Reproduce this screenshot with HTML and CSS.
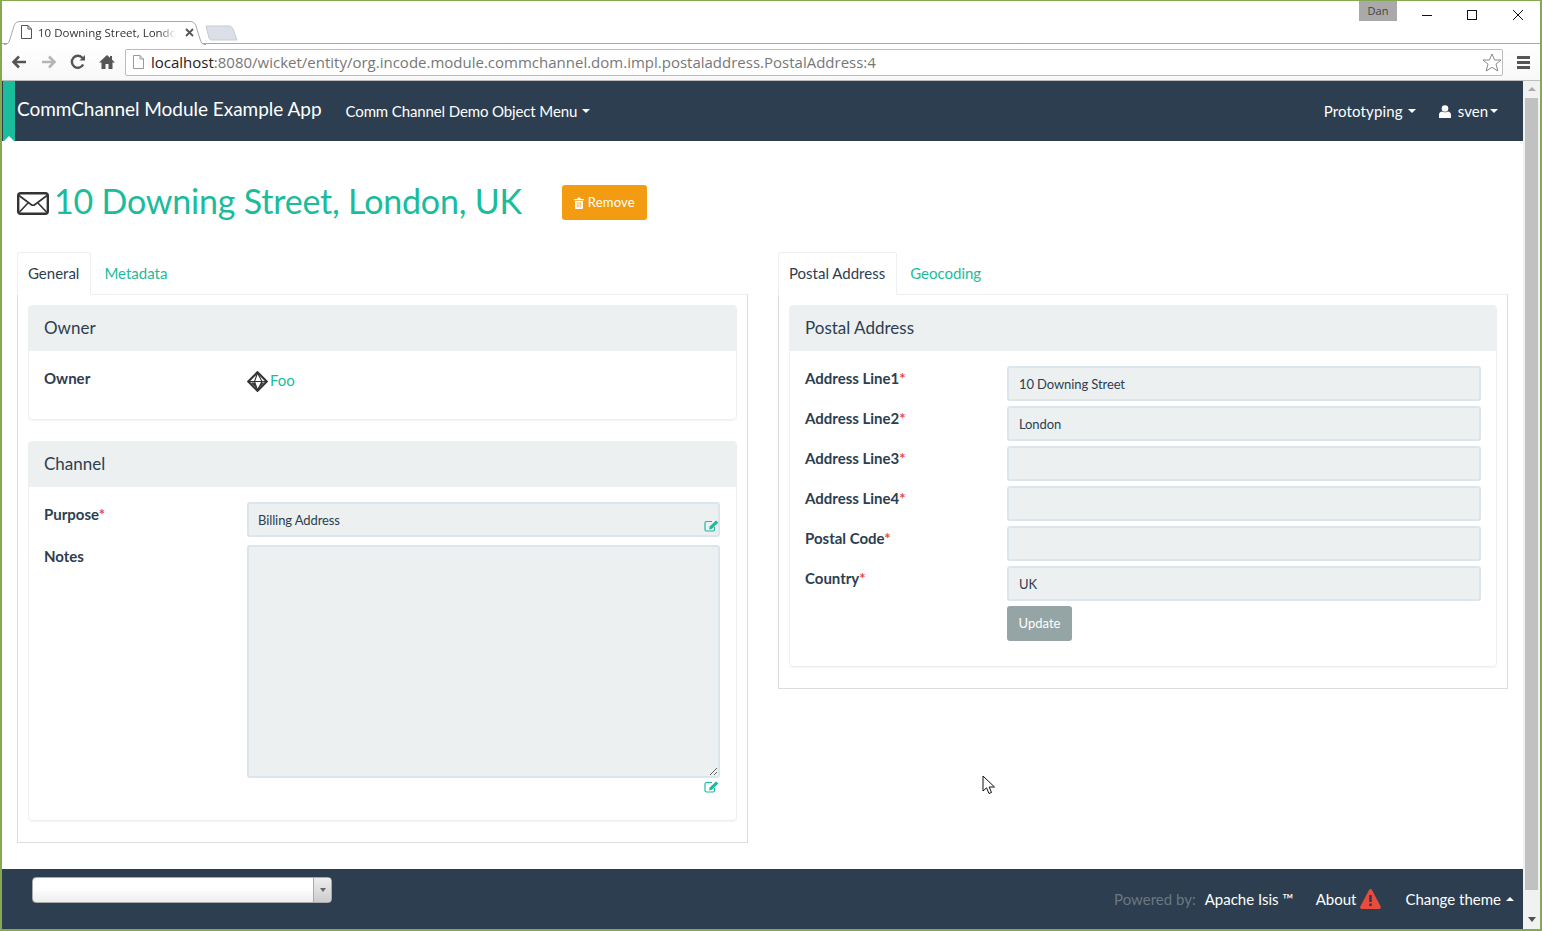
FILE: index.html
```html
<!DOCTYPE html>
<html lang="en">
<head>
<meta charset="utf-8">
<title>10 Downing Street, London, UK</title>
<link rel="stylesheet" href="styles.css">
</head>
<body>
<div class="window">
  <div class="tabstrip">
    <div class="browser-tab">
      <svg class="tab-shape" width="202" height="24" viewBox="0 0 202 24"><path d="M0 23.500 H1 C4 23.500 5 21 6 18 L10 5 C11 2 12.500 .5 16 .5 H186 C189.500 .5 191 2 192 5 L196 18 C197 21 198 23.500 201 23.500 H202" fill="#fff" stroke="#a8a8a8"/></svg>
      <svg class="doc-icon" width="11" height="14" viewBox="0 0 11 14"><path d="M.5.500H7L10.500 4V13.500H.5Z M7 .5V4H10.500" fill="#fff" stroke="#555"/></svg>
      <span class="tab-title">10 Downing Street, Londo</span>
      <svg class="tab-close" width="9" height="9" viewBox="0 0 9 9"><path d="M1 1L8 8M8 1L1 8" stroke="#555" stroke-width="1.800"/></svg>
    </div>
    <svg class="new-tab" width="33" height="16" viewBox="0 0 33 16"><path d="M1 1H24C26 1 27 2 28 4L32 15H6C5 15 4.500 14 4 13Z" fill="#dbe0e8" stroke="#c6cbd3"/></svg>
    <div class="spacer"></div>
    <div class="user-badge">Dan</div>
    <div class="win-controls">
      <svg width="10" height="10" viewBox="0 0 10 10"><path d="M0 5.500H10" stroke="#111"/></svg>
      <svg width="10" height="10" viewBox="0 0 10 10"><rect x=".5" y=".5" width="9" height="9" fill="none" stroke="#111"/></svg>
      <svg class="win-close" width="10" height="10" viewBox="0 0 10 10"><path d="M0 0L10 10M10 0L0 10" stroke="#111"/></svg>
    </div>
  </div>
  <div class="toolbar">
    <svg class="tool tool-back" width="16" height="14" viewBox="0 0 16 14"><path d="M15 7H3M8 1.500L2.500 7L8 12.500" fill="none" stroke="#555" stroke-width="2.600"/></svg>
    <svg class="tool" width="16" height="14" viewBox="0 0 16 14"><path d="M1 7H13M8 1.500L13.500 7L8 12.500" fill="none" stroke="#b5b5b5" stroke-width="2.600"/></svg>
    <svg class="tool" width="16" height="16" viewBox="0 0 16 16"><path d="M13.200 10.500A6 6 0 1 1 12.500 4" fill="none" stroke="#555" stroke-width="2.400"/><path d="M9.500 6.500H15V1Z" fill="#555"/></svg>
    <svg class="tool tool-home" width="16" height="16" viewBox="0 0 16 16"><path d="M8 1L0 8.500H2.500V15H6.500V10H9.500V15H13.500V8.500H16L13 5.700V2H11V3.800Z" fill="#555"/></svg>
    <div class="omnibox">
      <svg width="11" height="14" viewBox="0 0 11 14"><path d="M.5.500H7L10.500 4V13.500H.5Z M7 .5V4H10.500" fill="#fff" stroke="#999"/></svg>
      <span class="url"><span class="url-host">localhost</span>:8080/wicket/entity/org.incode.module.commchannel.dom.impl.postaladdress.PostalAddress:4</span>
      <svg class="star" width="20" height="19" viewBox="0 0 20 19"><path d="M10 1L12.600 7H19L14 11.200L15.800 18L10 14.300L4.200 18L6 11.200L1 7H7.400Z" fill="#fff" stroke="#888"/></svg>
    </div>
    <div class="hamburger"><i></i><i></i><i></i></div>
  </div>
  <div class="viewport">
    <div class="page">
      <nav class="navbar">
        <div class="ribbon"></div>
        <a class="brand">CommChannel Module Example App</a>
        <a class="nav-link menu-link">Comm Channel Demo Object Menu<i class="caret"></i></a>
        <div class="spacer"></div>
        <a class="nav-link proto-link">Prototyping<i class="caret"></i></a>
        <a class="nav-link user-link">
          <svg width="12" height="13" viewBox="0 0 12 13"><circle cx="6" cy="3.500" r="3.300" fill="#fff"/><path d="M0 13V9.500C0 7.800 1.500 6.800 3 6.500C4 7.500 8 7.500 9 6.500C10.500 6.800 12 7.800 12 9.500V13Z" fill="#fff"/></svg>
          <span>sven</span><i class="caret tight"></i>
        </a>
      </nav>
      <main class="content">
        <div class="title-row">
          <svg class="mail-icon" width="32" height="23" viewBox="0 0 32 23"><rect x="1.200" y="1.200" width="29.600" height="20.600" rx="2.500" fill="#fff" stroke="#333" stroke-width="2.400"/><path d="M2 3.500L14 12.500Q16 14 18 12.500L30 3.500M2.500 20L11.500 10.500M29.500 20L20.500 10.500" fill="none" stroke="#333" stroke-width="1.600"/></svg>
          <h1 class="title">10 Downing Street, London, UK</h1>
          <a class="btn btn-warning">
            <svg width="10" height="12" viewBox="0 0 10 12"><path d="M0 2H3.200L3.800 .5H6.200L6.800 2H10V3.200H0Z M1 4H9V11C9 11.600 8.600 12 8 12H2C1.400 12 1 11.600 1 11Z" fill="#fff"/><path d="M3.300 5V10.500M5 5V10.500M6.700 5V10.500" stroke="#f39c12" stroke-width=".7"/></svg>
            Remove
          </a>
        </div>
        <div class="columns">
          <section class="column left-col">
            <div class="tabs">
              <a class="tab active">General</a>
              <a class="tab">Metadata</a>
            </div>
            <div class="tab-content">
              <div class="panel">
                <div class="panel-heading">Owner</div>
                <div class="panel-body owner-body">
                  <div class="field-row">
                    <label class="field-label">Owner</label>
                    <div class="field-value owner-value">
                      <svg width="21" height="21" viewBox="0 0 21 21"><path d="M10.500 1.200L19.800 10.500L10.500 19.800L1.200 10.500Z" fill="#fff" stroke="#333" stroke-width="2.200"/><path d="M2 10.500H19M10.500 2L7.500 10.500L10.500 19M10.500 2L15 10.500L10.500 19" fill="none" stroke="#333" stroke-width="1.100"/><path d="M4 11.500H7.500L9.800 17.500ZM17 11.500H14.500L11.500 17.500Z" fill="#333"/></svg>
                      <a class="link">Foo</a>
                    </div>
                  </div>
                </div>
              </div>
              <div class="panel">
                <div class="panel-heading">Channel</div>
                <div class="panel-body channel-body">
                  <div class="field-row">
                    <label class="field-label">Purpose<span class="req">*</span></label>
                    <div class="field-value">
                      <div class="input">Billing Address
                        <svg class="edit-icon over" width="15" height="12" viewBox="0 0 15 12"><use href="#edit"/></svg>
                      </div>
                    </div>
                  </div>
                  <div class="field-row notes-row">
                    <label class="field-label">Notes</label>
                    <div class="field-value">
                      <textarea class="textarea" aria-label="Notes"></textarea>
                      <div class="below-edit"><svg class="edit-icon" width="15" height="12" viewBox="0 0 15 12"><use href="#edit"/></svg></div>
                    </div>
                  </div>
                </div>
              </div>
            </div>
          </section>
          <section class="column right-col">
            <div class="tabs">
              <a class="tab active">Postal Address</a>
              <a class="tab">Geocoding</a>
            </div>
            <div class="tab-content">
              <div class="panel">
                <div class="panel-heading">Postal Address</div>
                <div class="panel-body address-body">
                  <div class="field-row"><label class="field-label">Address Line1<span class="req">*</span></label><div class="field-value"><div class="input">10 Downing Street</div></div></div>
                  <div class="field-row"><label class="field-label">Address Line2<span class="req">*</span></label><div class="field-value"><div class="input">London</div></div></div>
                  <div class="field-row"><label class="field-label">Address Line3<span class="req">*</span></label><div class="field-value"><div class="input"></div></div></div>
                  <div class="field-row"><label class="field-label">Address Line4<span class="req">*</span></label><div class="field-value"><div class="input"></div></div></div>
                  <div class="field-row"><label class="field-label">Postal Code<span class="req">*</span></label><div class="field-value"><div class="input"></div></div></div>
                  <div class="field-row"><label class="field-label">Country<span class="req">*</span></label><div class="field-value"><div class="input">UK</div></div></div>
                  <div class="field-row"><div class="field-label"></div><div class="field-value"><a class="btn btn-default">Update</a></div></div>
                </div>
              </div>
            </div>
          </section>
        </div>
        <svg class="cursor" width="14" height="20" viewBox="0 0 14 20"><path d="M1 1V16L4.500 12.800L7 18.500L9.500 17.500L7.200 12H12.500Z" fill="#fff" stroke="#111"/></svg>
      </main>
      <footer class="footer">
        <div class="combo"><div class="combo-arrow"><i></i></div></div>
        <div class="spacer"></div>
        <div class="footer-links">
          <span class="powered">Powered by:</span>
          <a class="foot-link isis">Apache Isis ™</a>
          <a class="foot-link about">About
            <svg width="21" height="20" viewBox="0 0 21 20"><path d="M10.500 0C11.200 0 11.700 .4 12 1L20.700 17.500C21.300 18.700 20.500 20 19.200 20H1.800C.5 20 -.3 18.700 .3 17.500L9 1C9.300 .4 9.800 0 10.500 0Z" fill="#e74c3c"/><rect x="9.200" y="6" width="2.600" height="7" fill="#2c3e50"/><rect x="9.200" y="14.500" width="2.600" height="2.600" fill="#2c3e50"/></svg>
          </a>
          <a class="foot-link theme">Change theme<i class="caret up"></i></a>
        </div>
      </footer>
    </div>
    <div class="scrollbar">
      <div class="arrow arrow-up"></div>
      <div class="thumb"></div>
      <div class="arrow arrow-down"></div>
    </div>
  </div>
</div>
<svg class="defs" width="0" height="0">
  <symbol id="edit" viewBox="0 0 15 12">
    <path d="M8 1.500H2.500C1.500 1.500 1 2 1 3V9.500C1 10.500 1.500 11 2.500 11H9C10 11 10.500 10.500 10.500 9.500V7" fill="none" stroke="#1abc9c" stroke-width="1.200"/>
    <path d="M12 .5L14.300 2.500L8 8.800L5 9.500L5.700 6.600Z" fill="#1abc9c"/>
  </symbol>
</svg>
</body>
</html>
```
FILE: styles.css
```css
* { box-sizing: border-box; }
html, body { margin: 0; padding: 0; height: 100%; overflow: hidden; }
body { font-family: Lato, "Liberation Sans", sans-serif; font-size: 15px; color: #2c3e50; background: #fff; }
a { color: inherit; text-decoration: none; }
i { font-style: normal; }
.defs { position: absolute; }
.spacer { flex: 1; }

.window {
  height: 931px;
  display: flex;
  flex-direction: column;
  border: 2px solid #86a850;
  border-top-width: 1px;
}

/* browser chrome */
.tabstrip {
  height: 43px;
  display: flex;
  align-items: flex-start;
  background: #fff;
  border-bottom: 1px solid #a8a8a8;
  position: relative;
}
.browser-tab {
  width: 202px;
  height: 24px;
  margin-top: 20px;
  margin-left: 2px;
  padding-bottom: 2px;
  display: flex;
  align-items: center;
  position: relative;
  z-index: 1;
  font-family: "Open Sans", sans-serif;
  font-size: 11.5px;
  color: #333;
}
.tab-shape { position: absolute; left: 0; top: 0; }
.doc-icon { position: relative; margin-left: 17px; }
.tab-title {
  position: relative;
  margin-left: 6px;
  width: 138px;
  white-space: nowrap;
  overflow: hidden;
  -webkit-mask-image: linear-gradient(90deg, #000 88%, transparent);
  mask-image: linear-gradient(90deg, #000 88%, transparent);
}
.tab-close { position: relative; margin-left: 9px; }
.new-tab { margin-top: 24px; margin-left: -1px; }
.user-badge {
  width: 38px;
  height: 20px;
  background: #a9a9a9;
  color: #444;
  font-family: "Open Sans", sans-serif;
  font-size: 11px;
  line-height: 20px;
  text-align: center;
}
.win-controls {
  width: 143px;
  display: flex;
  gap: 35px;
  padding: 9px 0 0 25px;
}
.win-close { margin-left: 1px; }
.toolbar {
  height: 37px;
  display: flex;
  align-items: center;
  background: linear-gradient(#fff, #f8f8f8);
  border-bottom: 1px solid #bdbdbd;
  padding: 0 0 0 9px;
}
.tool { margin-right: 13px; flex: none; }
.tool-back { margin-right: 14px; }
.tool-home { margin-right: 10px; }
.omnibox {
  width: 1378px;
  height: 27px;
  background: #fff;
  border: 1px solid #bcbcbc;
  border-radius: 2px;
  display: flex;
  align-items: center;
  padding-left: 7px;
}
.url {
  margin-left: 7px;
  font-family: "Open Sans", sans-serif;
  font-size: 15px;
  color: #777;
  white-space: nowrap;
  flex: 1;
}
.url-host { color: #222; }
.hamburger {
  margin-left: 14px;
  display: flex;
  flex-direction: column;
  gap: 2px;
}
.hamburger i { display: block; width: 13px; height: 3px; background: #555; }

/* page frame */
.viewport { flex: 1; display: flex; min-height: 0; }
.page { flex: 1; min-width: 0; display: flex; flex-direction: column; }
.scrollbar {
  width: 17px;
  background: #f1f1f1;
  display: flex;
  flex-direction: column;
  align-items: center;
}
.arrow { width: 0; height: 0; border-left: 4px solid transparent; border-right: 4px solid transparent; }
.arrow-up { margin-top: 6px; margin-bottom: 7px; border-bottom: 4px solid #aaa; }
.arrow-down { margin-top: 27px; border-top: 5px solid #505050; }
.thumb { width: 13px; height: 792px; background: #c1c1c1; }

.navbar {
  height: 60px;
  flex: none;
  background: #2c3e50;
  color: #fff;
  display: flex;
  align-items: center;
  padding-right: 25px;
}
.ribbon {
  width: 12px;
  height: 60px;
  margin-left: 1px;
  background: #1abc9c;
  position: relative;
}
.ribbon::after {
  content: "";
  position: absolute;
  left: 1px;
  bottom: 0;
  border-left: 5px solid transparent;
  border-right: 5px solid transparent;
  border-bottom: 5px solid #fff;
}
.brand { margin-left: 2px; font-size: 19px; line-height: 24px; margin-top: -4px; letter-spacing: -.03px; }
.nav-link { display: flex; align-items: center; font-size: 15px; }
.menu-link { margin-left: 24px; letter-spacing: -.12px; }
.proto-link { letter-spacing: .15px; }
.user-link { margin-left: 23px; gap: 7px; }
.caret {
  width: 0;
  height: 0;
  margin-left: 5px;
  border-left: 4px solid transparent;
  border-right: 4px solid transparent;
  border-top: 4px solid currentColor;
  display: inline-block;
}
.caret.tight { margin-left: -5px; }
.caret.up { border-top: 0; border-bottom: 4px solid currentColor; }

.content { flex: 1; min-height: 0; padding: 44px 15px 0; position: relative; }
.title-row { display: flex; align-items: center; height: 35px; margin-bottom: 32px; }
.mail-icon { flex: none; margin-top: 2px; }
.title {
  margin: -4px 40px 0 5px;
  font-size: 34px;
  font-weight: 400;
  line-height: 35px;
  letter-spacing: -.2px;
  color: #1abc9c;
  white-space: nowrap;
}
.btn {
  display: inline-flex;
  align-items: center;
  justify-content: center;
  height: 35px;
  padding-bottom: 2px;
  border-radius: 3px;
  color: #fff;
  font-size: 13px;
}
.btn-warning { width: 85px; background: #f39c12; gap: 4px; letter-spacing: .2px; }
.btn-warning svg { margin-top: 2px; }
.btn-default { width: 65px; background: #95a5a6; }

.columns { display: flex; gap: 30px; align-items: flex-start; }
.column { flex: none; }
.left-col { width: 731px; }
.right-col { width: 730px; }
.tabs { display: flex; height: 42px; gap: 2px; }
.tab {
  padding: 0 11px 0 10px;
  border: 1px solid transparent;
  color: #1abc9c;
  line-height: 41px;
  height: 43px;
  position: relative;
  z-index: 1;
}
.tab.active {
  color: #2c3e50;
  background: #fff;
  border-color: #ecf0f1;
  border-bottom-color: #fff;
  border-radius: 3px 3px 0 0;
}
.tab-content {
  border: 1px solid #dcdcdc;
  border-top-color: #ecf0f1;
  padding: 10px 10px 0;
}
.panel {
  border: 1px solid #ecf0f1;
  border-radius: 4px;
  margin-bottom: 21px;
  box-shadow: 0 1px 1px rgba(0, 0, 0, .05);
}
.panel-heading {
  height: 45px;
  background: #ecf0f1;
  padding: 0 15px;
  font-size: 17px;
  line-height: 44px;
}
.panel-body { padding: 15px 16px 25px 15px; }
.owner-body { height: 68px; }
.channel-body { padding-bottom: 27px; }
.channel-body .input { padding-left: 9px; }
.address-body { padding-right: 15px; }
.address-body .field-label { width: 202px; }
.field-row { display: flex; margin-bottom: 5px; }
.field-row:last-child { margin-bottom: 0; }
.notes-row { margin-top: 8px; }
.notes-row .field-label { margin-top: -1px; }
.field-label { width: 203px; flex: none; font-weight: 700; line-height: 25px; }
.req { color: #e74c3c; font-weight: 700; }
.field-value { flex: 1; min-width: 0; }
.owner-value { display: flex; align-items: center; gap: 2px; margin-top: 3px; height: 21px; }
.owner-value svg { margin-top: 4px; }
.link { color: #1abc9c; }
.input {
  height: 35px;
  background: #ecf0f1;
  border: 2px solid #dce4ec;
  border-radius: 3px;
  padding: 0 10px;
  font-size: 13px;
  letter-spacing: -.1px;
  line-height: 33px;
  position: relative;
}
.edit-icon { display: block; }
.edit-icon.over { position: absolute; right: -1px; bottom: 3px; }
.textarea {
  display: block;
  width: 100%;
  height: 233px;
  background: #ecf0f1;
  border: 2px solid #dce4ec;
  border-radius: 3px;
  padding: 0;
  margin: 0;
  resize: vertical;
  outline: 0;
}
.below-edit { display: flex; justify-content: flex-end; margin-top: 3px; padding-right: 1px; height: 12px; }
.cursor { position: absolute; left: 980px; top: 634px; }

.footer {
  height: 60px;
  flex: none;
  background: #2c3e50;
  display: flex;
  padding: 8px 0 0 30px;
}
.combo {
  width: 300px;
  height: 26px;
  background: linear-gradient(#fff 40%, #eee);
  border: 1px solid #aaa;
  border-radius: 4px;
  display: flex;
  justify-content: flex-end;
}
.combo-arrow {
  width: 18px;
  border-left: 1px solid #aaa;
  background: linear-gradient(#eee, #ccc);
  border-radius: 0 3px 3px 0;
  display: flex;
  align-items: center;
  justify-content: center;
}
.combo-arrow i {
  width: 0;
  height: 0;
  border-left: 3px solid transparent;
  border-right: 3px solid transparent;
  border-top: 4px solid #666;
}
.footer-links { display: flex; align-items: center; height: 44px; padding-right: 9px; color: #fff; }
.powered { color: #6b7782; }
.foot-link { display: inline-flex; align-items: center; }
.isis { margin-left: 9px; }
.about { margin-left: 22px; gap: 4px; }
.theme { margin-left: 24px; }
```
